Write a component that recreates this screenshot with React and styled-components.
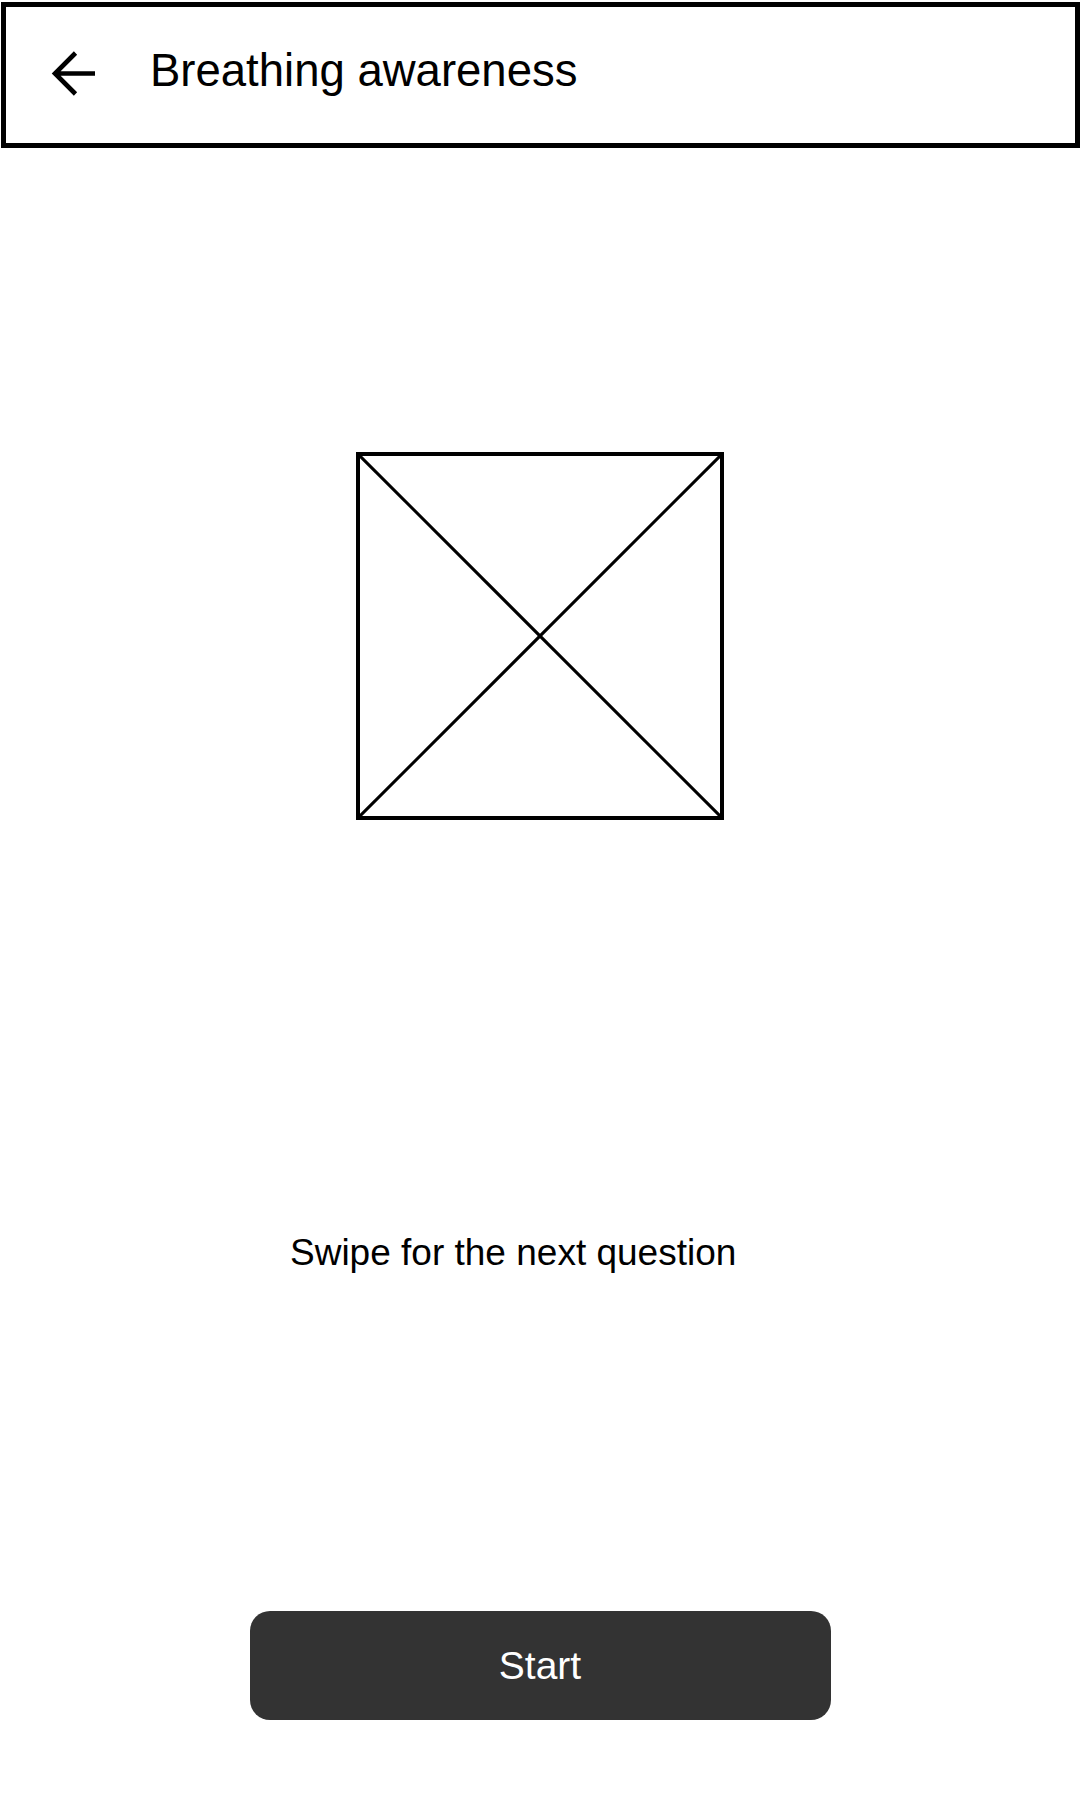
import React from "react";
import styled, { createGlobalStyle } from "styled-components";

const GlobalStyle = createGlobalStyle`
  html, body {
    margin: 0;
    padding: 0;
    background: #ffffff;
    overflow-x: hidden;
  }
  body {
    font-family: "Liberation Sans", Arial, sans-serif;
    color: #000000;
  }
`;

const Page = styled.div`
  display: flex;
  flex-direction: column;
  min-height: 1800px;
`;

const Header = styled.header`
  box-sizing: border-box;
  display: flex;
  align-items: flex-start;
  gap: 53px;
  width: calc(100% - 1px);
  height: 146px;
  margin: 2px 0 0 1px;
  padding: 39px 0 0 45px;
  border: 5px solid #000000;
`;

const BackButton = styled.button`
  display: flex;
  width: 46px;
  height: 46px;
  margin-top: 5px;
  padding: 0;
  border: none;
  background: none;
  cursor: pointer;
`;

const Title = styled.h1`
  margin: 0;
  font-size: 45.5px;
  font-weight: 400;
  line-height: 50px;
`;

const Placeholder = styled.div`
  box-sizing: border-box;
  width: 368px;
  height: 368px;
  margin: 304px auto 0;
  border: 4.5px solid #000000;

  svg {
    display: block;
    width: 100%;
    height: 100%;
  }
`;

const Hint = styled.p`
  align-self: flex-start;
  margin: 411px 0 0 290px;
  font-size: 37px;
  line-height: 43px;
`;

const StartButton = styled.button`
  display: flex;
  align-items: center;
  justify-content: center;
  width: 581px;
  height: 109px;
  margin: 337px auto 0;
  border: none;
  border-radius: 20px;
  background: #333333;
  color: #ffffff;
  font-family: "Liberation Sans", Arial, sans-serif;
  font-size: 39px;
  cursor: pointer;
`;

const BackArrow = () => (
  <svg width="46" height="46" viewBox="0 0 46 46" fill="none">
    <path
      d="M44 22.5H4 M24.5 2 L4 22.5 L24.5 43"
      stroke="#000"
      strokeWidth="4.6"
    />
  </svg>
);

const App = () => {
  return (
    <Page>
      <GlobalStyle />
      <Header>
        <BackButton aria-label="Back">
          <BackArrow />
        </BackButton>
        <Title>Breathing awareness</Title>
      </Header>

      <Placeholder>
        <svg viewBox="0 0 359 359" preserveAspectRatio="none">
          <line x1="0" y1="0" x2="359" y2="359" stroke="#000" strokeWidth="3" />
          <line x1="359" y1="0" x2="0" y2="359" stroke="#000" strokeWidth="3" />
        </svg>
      </Placeholder>

      <Hint>Swipe for the next question</Hint>

      <StartButton>Start</StartButton>
    </Page>
  );
};

export default App;
